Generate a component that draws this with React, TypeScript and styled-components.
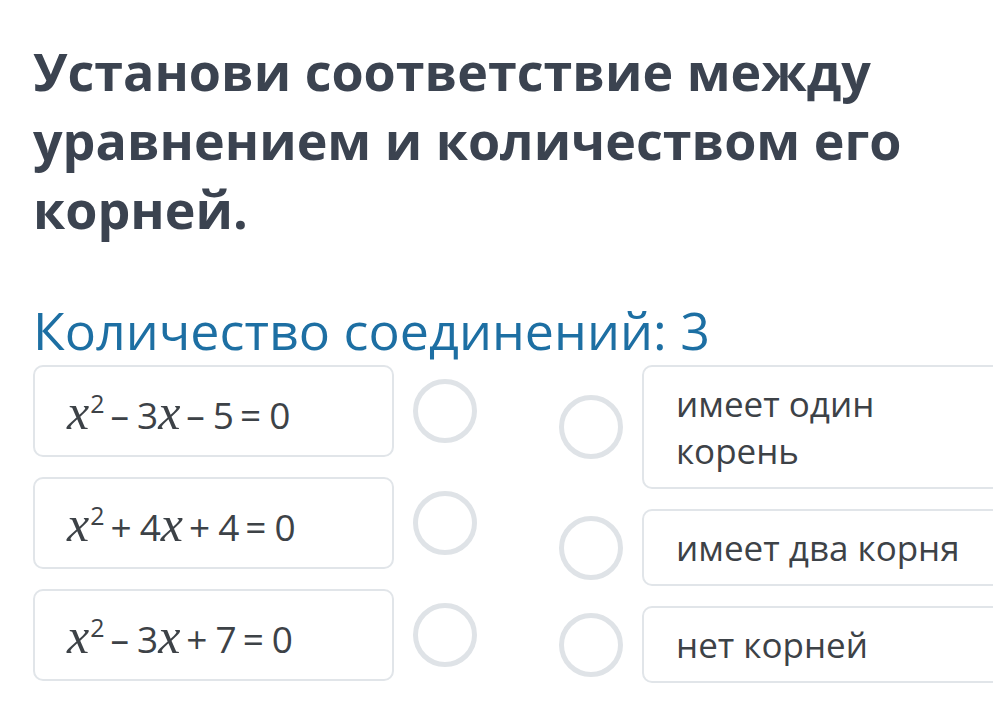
import React from 'react'
import styled, { createGlobalStyle } from 'styled-components'

const GlobalStyle = createGlobalStyle`
  html, body {
    margin: 0;
    padding: 0;
    background: #ffffff;
    overflow: hidden;
  }
  body {
    font-family: "Open Sans", "Noto Sans", sans-serif;
  }
`

const Page = styled.div`
  width: 993px;
  height: 716px;
  overflow: hidden;
  padding: 36px 0 0 33px;
  box-sizing: border-box;
`

const Title = styled.h1`
  margin: 0;
  font-size: 52px;
  line-height: 69px;
  font-weight: 700;
  color: #3b4350;
  width: 900px;
`

const Counter = styled.div`
  margin-top: 57px;
  font-size: 52px;
  line-height: 60px;
  font-weight: 400;
  color: #1d6fa3;
`

const Board = styled.div`
  margin-top: 5px;
  display: flex;
  gap: 82px;
  width: 1000px;
`

const Column = styled.div`
  display: flex;
  flex-direction: column;
  gap: 20px;
`

const Row = styled.div`
  display: flex;
  align-items: center;
  gap: 19px;
`

const Card = styled.div`
  box-sizing: border-box;
  width: 361px;
  border: 2px solid #e1e5e9;
  border-radius: 10px;
  background: #fff;
  color: #3d4247;
  white-space: nowrap;
`

const EquationCard = styled(Card)`
  height: 92px;
  padding: 22px 32px 0;
  font-size: 37px;
  line-height: 52px;
`

const AnswerCard = styled(Card)`
  padding: 13px 32px;
  font-size: 35px;
  line-height: 47px;
`

const Dot = styled.div`
  flex: none;
  width: 64px;
  height: 64px;
  box-sizing: border-box;
  border: 5px solid #dfe3e7;
  border-radius: 50%;
`

const Var = styled.span`
  font-family: "Liberation Serif", "DejaVu Serif", serif;
  font-style: italic;
  font-size: 50px;
  line-height: 0;
`

const Sup = styled.sup`
  font-size: 25px;
  line-height: 0;
  vertical-align: 0;
  position: relative;
  top: -16px;
  margin-left: 1px;
`

const Op = styled.span`
  margin: 0 8px 0 6px;
`

type Term = { coef: string; op: string }

const equations: { b: Term; c: Term }[] = [
  { b: { op: '–', coef: '3' }, c: { op: '–', coef: '5' } },
  { b: { op: '+', coef: '4' }, c: { op: '+', coef: '4' } },
  { b: { op: '–', coef: '3' }, c: { op: '+', coef: '7' } },
]

const answers = ['имеет один корень', 'имеет два корня', 'нет корней']

export default function App() {
  return (
    <>
      <GlobalStyle />
      <Page>
        <Title>Установи соответствие между уравнением и количеством его корней.</Title>
        <Counter>Количество соединений: 3</Counter>
        <Board>
          <Column>
            {equations.map((eq, i) => (
              <Row key={i}>
                <EquationCard>
                  <Var>x</Var>
                  <Sup>2</Sup>
                  <Op>{eq.b.op}</Op>
                  {eq.b.coef}
                  <Var>x</Var>
                  <Op>{eq.c.op}</Op>
                  {eq.c.coef}
                  <Op>=</Op>0
                </EquationCard>
                <Dot />
              </Row>
            ))}
          </Column>
          <Column>
            {answers.map((a, i) => (
              <Row key={i}>
                <Dot />
                <AnswerCard>{i === 0 ? <>имеет один<br />корень</> : a}</AnswerCard>
              </Row>
            ))}
          </Column>
        </Board>
      </Page>
    </>
  )
}
